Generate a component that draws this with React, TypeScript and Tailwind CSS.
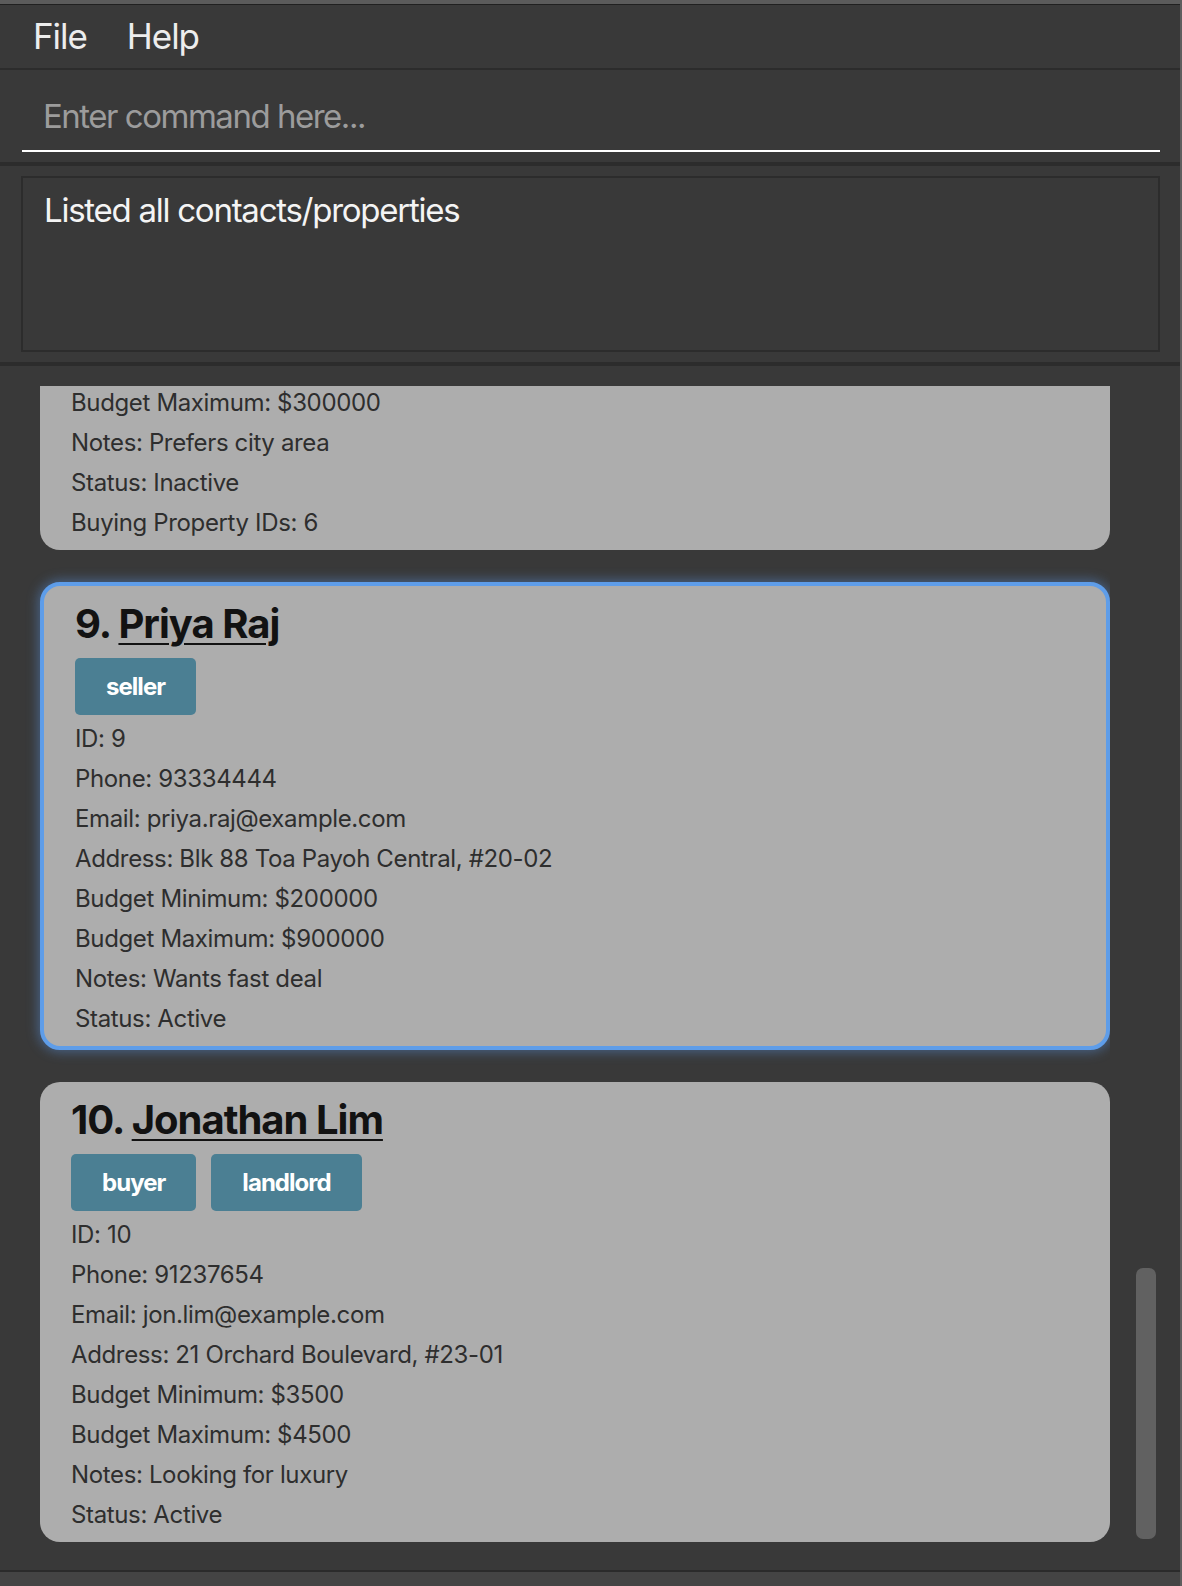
import React from 'react';

type Person = {
  index: number;
  name: string;
  tags: string[];
  lines: string[];
  selected?: boolean;
};

const people: Person[] = [
  {
    index: 9,
    name: 'Priya Raj',
    tags: ['seller'],
    selected: true,
    lines: [
      'ID: 9',
      'Phone: 93334444',
      'Email: priya.raj@example.com',
      'Address: Blk 88 Toa Payoh Central, #20-02',
      'Budget Minimum: $200000',
      'Budget Maximum: $900000',
      'Notes: Wants fast deal',
      'Status: Active',
    ],
  },
  {
    index: 10,
    name: 'Jonathan Lim',
    tags: ['buyer', 'landlord'],
    lines: [
      'ID: 10',
      'Phone: 91237654',
      'Email: jon.lim@example.com',
      'Address: 21 Orchard Boulevard, #23-01',
      'Budget Minimum: $3500',
      'Budget Maximum: $4500',
      'Notes: Looking for luxury',
      'Status: Active',
    ],
  },
];

const Line = ({ text }: { text: string }) => (
  <div className="h-[40px] leading-[40px] text-[24px] tracking-[-0.015em] text-[#2e2e2e] whitespace-nowrap">
    {text}
  </div>
);

const PersonCard = ({ person }: { person: Person }) => {
  return (
    <div
      className={
        person.selected
          ? 'rounded-[20px] bg-[#adadad] border-[4px] border-[#5e9de9] shadow-[0_0_12px_2px_rgba(90,150,230,0.45)] pl-[31px] pt-[13px] pb-[7px]'
          : 'rounded-[20px] bg-[#adadad] pl-[31px] pt-[13px] pb-[7px]'
      }
    >
      <div className="h-[50px] leading-[50px] text-[40px] font-bold tracking-[-0.025em] text-[#121212] whitespace-nowrap">
        {person.index}.{' '}
        <span className="underline decoration-2 underline-offset-[5px]">{person.name}</span>
      </div>
      <div className="mt-[9px] flex gap-[15px]">
        {person.tags.map((tag) => (
          <span
            key={tag}
            className="h-[57px] px-[31px] flex items-center rounded-[5px] bg-[#4b7f93] text-white text-[24px] font-bold tracking-[-0.04em]"
          >
            {tag}
          </span>
        ))}
      </div>
      <div className="mt-[4px]">
        {person.lines.map((l) => (
          <Line key={l} text={l} />
        ))}
      </div>
    </div>
  );
};

export default function App() {
  return (
    <div className="w-[1182px] h-[1586px] flex bg-[#393939] overflow-hidden font-['Inter','Noto_Sans',sans-serif]">
      <div className="w-[1180px] flex flex-col">
        {/* window top edge */}
        <div className="h-[4px] bg-[#5b5b5b]" />
        <div className="h-[1px] bg-[#202020]" />

        {/* menu bar */}
        <div className="h-[63px] flex items-center pl-[33px] text-[35px] tracking-[-0.03em] text-[#ededed]">
          <span>File</span>
          <span className="ml-[40px]">Help</span>
        </div>
        <div className="h-[2px] bg-[#2c2c2c]" />

        {/* command box */}
        <div className="h-[92px] pl-[22px] pr-[20px]">
          <div className="pt-[26px] pb-[14px] pl-[21px] border-b-2 border-white">
            <div className="h-[40px] leading-[40px] text-[33px] tracking-[-0.045em] text-[#9c9c9c]">
              Enter command here...
            </div>
          </div>
        </div>
        <div className="h-[4px] bg-[#2c2c2c]" />

        {/* result display */}
        <div className="h-[196px] pt-[10px] pl-[21px] pr-[20px]">
          <div className="h-[176px] border-2 border-[#2c2c2c] pt-[12px] pl-[21px]">
            <div className="h-[40px] leading-[40px] text-[33px] tracking-[-0.038em] text-[#f4f4f4]">
              Listed all contacts/properties
            </div>
          </div>
        </div>
        <div className="h-[4px] bg-[#2c2c2c]" />

        {/* list */}
        <div className="h-[1204px] flex pt-[20px]">
          <div className="w-[1110px] pl-[40px] flex flex-col gap-[32px] overflow-hidden">
            <div className="rounded-b-[20px] bg-[#adadad] pl-[31px] pb-[7px] overflow-hidden">
              <div className="-mt-[3px]">
                <Line text="Budget Maximum: $300000" />
                <Line text="Notes: Prefers city area" />
                <Line text="Status: Inactive" />
                <Line text="Buying Property IDs: 6" />
              </div>
            </div>
            {people.map((p) => (
              <PersonCard key={p.index} person={p} />
            ))}
          </div>
          <div className="ml-[26px] w-[20px]">
            <div className="mt-[882px] h-[271px] rounded-[7px] bg-[#616161]" />
          </div>
        </div>

        <div className="h-[2px] bg-[#2b2b2b]" />
        <div className="flex-1 bg-[#444444]" />
      </div>
      <div className="w-[2px] bg-[#5e5e5e]" />
    </div>
  );
}
